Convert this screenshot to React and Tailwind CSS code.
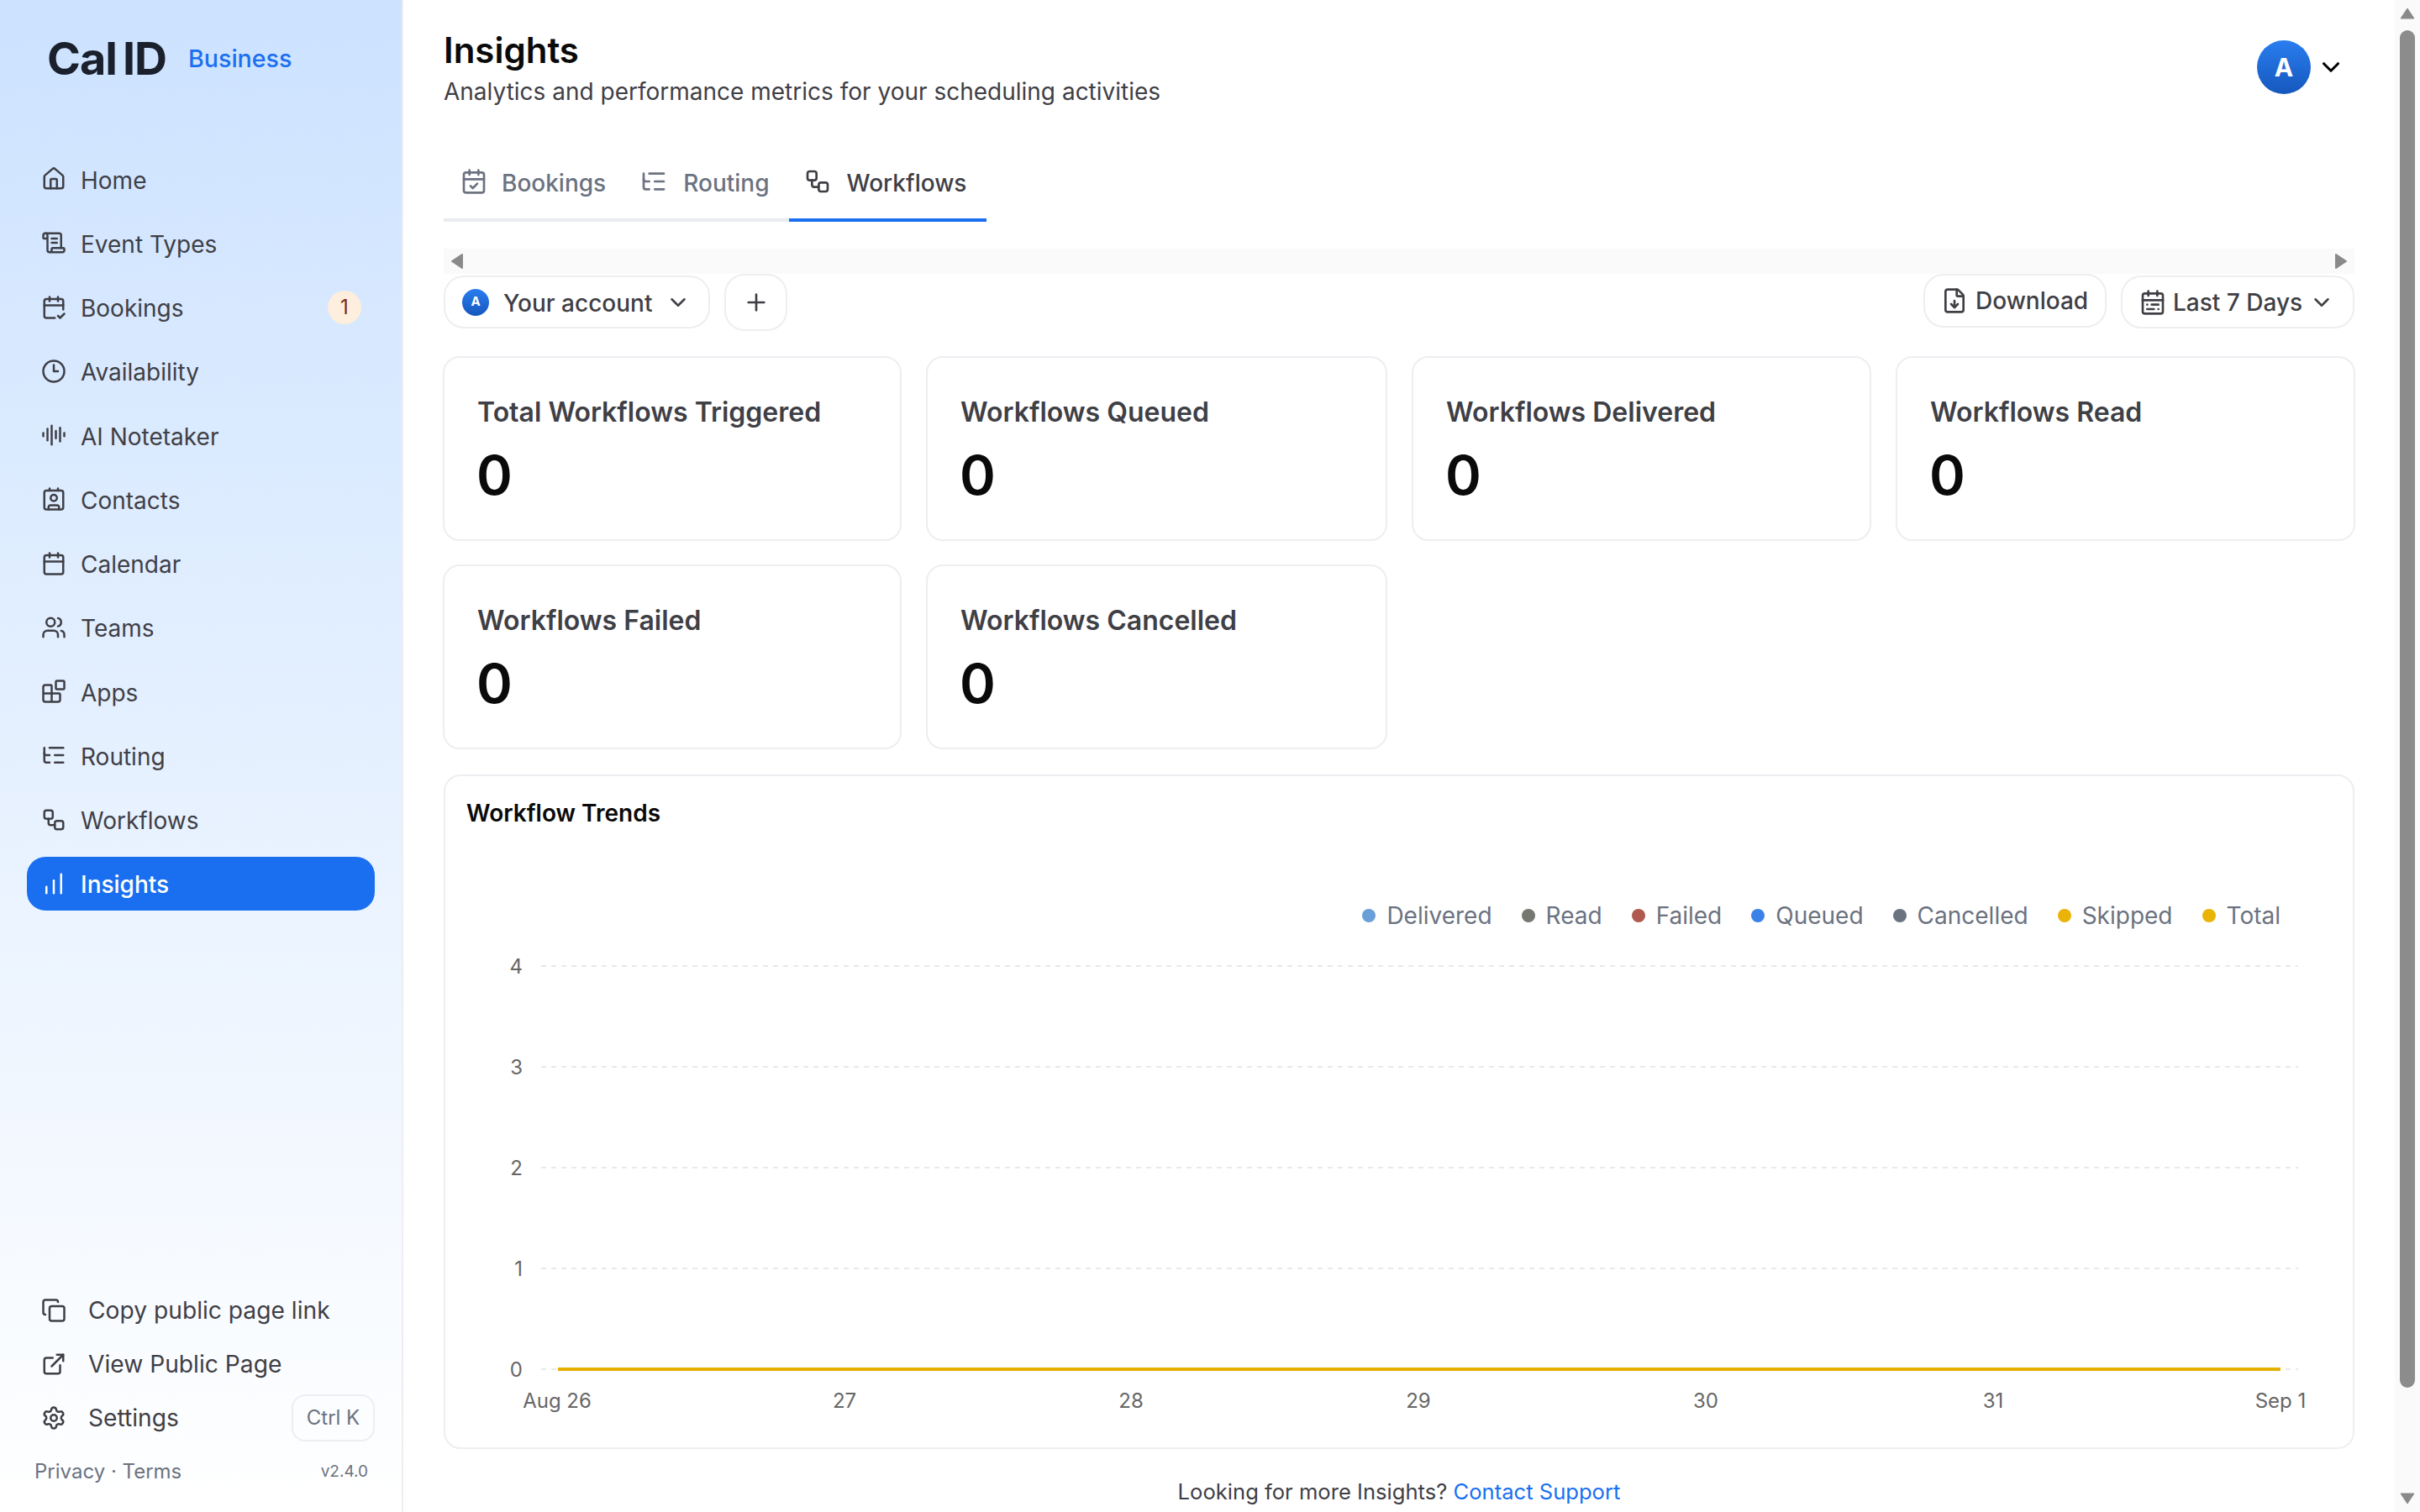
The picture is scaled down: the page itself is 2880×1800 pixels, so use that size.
import React from "react";
import {
  House, ScrollText, CalendarCheck2, CalendarCheck, Clock3, AudioLines, Contact, Calendar, Users, Blocks, ListTree, Workflow,
  ChartNoAxesColumnIncreasing, Copy, ExternalLink, Settings, FileDown, CalendarRange, ChevronDown, Plus,
} from "lucide-react";

const nav = [
  ["Home", House],
  ["Event Types", ScrollText],
  ["Bookings", CalendarCheck2, "1"],
  ["Availability", Clock3],
  ["AI Notetaker", AudioLines],
  ["Contacts", Contact],
  ["Calendar", Calendar],
  ["Teams", Users],
  ["Apps", Blocks],
  ["Routing", ListTree],
  ["Workflows", Workflow],
  ["Insights", ChartNoAxesColumnIncreasing, null, true],
];

const bottom = [
  ["Copy public page link", Copy],
  ["View Public Page", ExternalLink],
  ["Settings", Settings, "Ctrl K"],
];

const cards = ["Total Workflows Triggered", "Workflows Queued", "Workflows Delivered", "Workflows Read", "Workflows Failed", "Workflows Cancelled"];

const legend = [
  ["Delivered", "#6a9fd8"],
  ["Read", "#747870"],
  ["Failed", "#b05a4f"],
  ["Queued", "#3b82e8"],
  ["Cancelled", "#6b7280"],
  ["Skipped", "#eab308"],
  ["Total", "#eab308"],
];

function Sidebar() {
  return (
    <aside className="flex h-[1800px] w-[480px] shrink-0 flex-col border-r-2 border-[#eeeef2] bg-gradient-to-b from-[#cce2ff] to-white px-[32px]">
      <div className="flex h-[140px] items-center pl-[24px]">
        <span className="flex w-[168px] items-baseline text-[54px] leading-none font-bold tracking-[-1px] text-[#1a202c]">
          <span>Cal</span>
          <span className="ml-[7px]">ID</span>
        </span>
        <span className="text-[28.6px] font-medium text-[#1a6ff0]">Business</span>
      </div>
      <nav className="mt-[41px] flex flex-col gap-[12.27px]">
        {nav.map(([label, Icon, badge, active]) => (
          <div key={label} className={`flex h-[64px] items-center gap-[17px] rounded-[22px] pl-[17px] pr-[16px] text-[28px] ${active ? "bg-[#1a6ff0] font-medium text-white" : "text-[#3f3f46]"}`}>
            <Icon size={30} strokeWidth={2} className={active ? "text-white" : "text-[#3f3f46]"} />
            <span className="flex-1 pt-[3px]">{label}</span>
            {badge && <span className="flex h-[40px] w-[40px] items-center justify-center rounded-full bg-[#fdeedd] text-[24px] text-[#7c2d12]">{badge}</span>}
          </div>
        ))}
      </nav>
      <div className="mt-auto flex flex-col">
        {bottom.map(([label, Icon, kbd]) => (
          <div key={label} className="flex h-[64px] items-center gap-[26px] pl-[17px] text-[28.2px] text-[#3f3f46]">
            <Icon size={30} strokeWidth={2} className="text-[#3f3f46]" />
            <span className="flex-1">{label}</span>
            {kbd && <span className="flex h-[56px] w-[99px] items-center justify-center rounded-[16px] border-2 border-[#eeeef2] text-[24px] text-[#6b7280]">{kbd}</span>}
          </div>
        ))}
        <div className="mb-[28px] mt-[12px] flex h-[40px] items-center justify-between pl-[9px] pr-[8px] text-[#6b7280]">
          <span className="text-[24px]">Privacy · Terms</span>
          <span className="text-[19px]">v2.4.0</span>
        </div>
      </div>
    </aside>
  );
}

function Tab({ icon: Icon, label, active, cls }) {
  return (
    <div className={`flex h-[92px] items-center border-b-4 text-[28px] font-medium ${cls} ${active ? "border-[#1a6ff0] text-[#3f3f46]" : "border-[#e9ebef] text-[#6b7280]"}`}>
      <Icon size={32} strokeWidth={2} className={active ? "text-[#3f3f46]" : "text-[#6b7280]"} />
      <span className="pt-[3px]">{label}</span>
    </div>
  );
}

function Arrow({ d }) {
  return (
    <svg viewBox="0 0 14 18" className="h-[18px] w-[14px]">
      <path d={d} fill="#8a8a8a" stroke="#8a8a8a" strokeWidth="2" strokeLinejoin="round" />
    </svg>
  );
}

function Chart() {
  const ys = [[4, 1150], [3, 1270], [2, 1390], [1, 1510], [0, 1630]];
  const xs = [["Aug 26", 663], ["27", 1005], ["28", 1346], ["29", 1688], ["30", 2030], ["31", 2372], ["Sep 1", 2714]];
  return (
    <svg viewBox="530 1125 2270 598" className="mt-[15px] block h-[598px] w-[2270px] shrink-0">
      {ys.map(([v, y]) => (
        <g key={v}>
          <line x1="644" x2="2735" y1={y} y2={y} stroke="#e8e9ec" strokeWidth="2" strokeDasharray="6 6" />
          <text x="622" y={y + 9} textAnchor="end" fontSize="24" fill="#666666">{v}</text>
        </g>
      ))}
      {xs.map(([t, x]) => (
        <text key={t} x={x} y="1676" textAnchor="middle" fontSize="24" fill="#666666">{t}</text>
      ))}
      <line x1="664" x2="2714" y1="1630" y2="1630" stroke="#e6b000" strokeWidth="4" />
    </svg>
  );
}

function Main() {
  return (
    <main className="flex h-[1800px] min-w-0 flex-1 flex-col overflow-hidden px-[48px]">
      <header className="flex h-[172px] shrink-0 items-start justify-between">
        <div className="pt-[33px]">
          <h1 className="text-[42px] leading-[54px] font-semibold text-[#0a0a0a]">Insights</h1>
          <p className="mt-[4px] text-[28px] leading-[36px] text-[#3f3f46]">Analytics and performance metrics for your scheduling activities</p>
        </div>
        <div className="mr-[11px] mt-[48px] flex items-center gap-[7px]">
          <span className="flex h-[64px] w-[64px] items-center justify-center rounded-full bg-gradient-to-b from-[#2a7df0] to-[#1558bd] text-[30px] font-bold text-white">A</span>
          <ChevronDown size={34} strokeWidth={2.2} className="text-black" />
        </div>
      </header>
      <div className="flex shrink-0">
        <Tab icon={CalendarCheck} label="Bookings" cls="gap-[17px] pl-[20px] pr-[21px]" />
        <Tab icon={ListTree} label="Routing" cls="gap-[19px] pl-[20px] pr-[23px]" />
        <Tab icon={Workflow} label="Workflows" active cls="gap-[19px] pl-[18px] pr-[24px]" />
      </div>
      <div className="mt-[32px] flex h-[30px] shrink-0 items-center justify-between bg-[#fafafa] px-[9px]">
        <Arrow d="M13 1v16L1 9z" />
        <Arrow d="M1 1v16L13 9z" />
      </div>
      <div className="flex h-[68px] shrink-0 items-start justify-between">
        <div className="flex items-start gap-[17px]">
          <div className="mt-[2px] flex h-[63px] w-[317px] items-center rounded-[24px] border-2 border-[#eeeef2] pl-[20px] text-[28px] font-medium text-[#3f3f46]">
            <span className="flex h-[32px] w-[32px] items-center justify-center rounded-full bg-gradient-to-b from-[#2a7df0] to-[#1558bd] text-[15px] font-bold text-white">A</span>
            <span className="ml-[17px] pt-[2px]">Your account</span>
            <ChevronDown size={30} strokeWidth={2} className="ml-[16px] text-[#3f3f46]" />
          </div>
          <div className="flex h-[68px] w-[75px] items-center justify-center rounded-[24px] border-2 border-[#eeeef2]">
            <Plus size={32} strokeWidth={2} className="text-[#3f3f46]" />
          </div>
        </div>
        <div className="flex items-start gap-[17px]">
          <div className="flex h-[64px] w-[218px] items-center rounded-[24px] border-2 border-[#eeeef2] pl-[19px] text-[28px] font-medium text-[#3f3f46]">
            <FileDown size={32} strokeWidth={2} className="text-[#3f3f46]" />
            <span className="ml-[9px]">Download</span>
          </div>
          <div className="mt-[2px] flex h-[63px] w-[278px] items-center rounded-[24px] border-2 border-[#eeeef2] pl-[20px] text-[28px] font-medium text-[#3f3f46]">
            <CalendarRange size={32} strokeWidth={2} className="text-[#3f3f46]" />
            <span className="ml-[8px]">Last 7 Days</span>
            <ChevronDown size={30} strokeWidth={2} className="ml-[8px] text-[#3f3f46]" />
          </div>
        </div>
      </div>
      <div className="ml-[-1px] mt-[30px] grid shrink-0 grid-cols-[546px_549px_547px_547px] gap-x-[29px] gap-y-[28px]">
        {cards.map((c) => (
          <div key={c} className="h-[220px] rounded-[20px] border-2 border-[#eeeef2] px-[39px] pt-[44px]">
            <div className="text-[32px] leading-[42px] font-semibold text-[#3f3f46]">{c}</div>
            <div className="ml-[-1px] mt-[14px] text-[65px] leading-[80px] font-semibold text-[#0a0a0a]">0</div>
          </div>
        ))}
      </div>
      <section className="mt-[30px] flex h-[803px] shrink-0 flex-col rounded-[20px] border-2 border-[#eeeef2]">
        <h2 className="ml-[25px] mt-[24px] text-[28px] leading-[40px] font-semibold text-[#0a0a0a]">Workflow Trends</h2>
        <div className="mt-[82px] flex h-[40px] items-center justify-end gap-[35px] pr-[86px]">
          {legend.map(([t, c]) => (
            <div key={t} className="flex items-center gap-[13px] text-[28px] text-[#6b7280]">
              <span className="h-[16px] w-[16px] rounded-full" style={{ background: c }} />
              <span>{t}</span>
            </div>
          ))}
        </div>
        <Chart />
      </section>
      <p className="mt-[33px] text-center text-[25.6px] leading-[36px] text-[#3f3f46]">
        Looking for more Insights? <span className="text-[#1a6ff0]">Contact Support</span>
      </p>
    </main>
  );
}

function Scrollbar() {
  return (
    <div className="flex h-[1800px] w-[30px] shrink-0 flex-col items-center bg-[#fafafa] pt-[9px]">
      <svg viewBox="0 0 18 14" className="h-[14px] w-[18px] shrink-0"><path d="M9 1l8 12H1z" fill="#8a8a8a" stroke="#8a8a8a" strokeLinejoin="round" /></svg>
      <div className="mt-[13px] h-[1616px] w-[18px] shrink-0 rounded-full bg-[#8c8c8c]" />
      <svg viewBox="0 0 18 14" className="mt-[125px] h-[14px] w-[18px] shrink-0"><path d="M1 1h16L9 13z" fill="#8a8a8a" stroke="#8a8a8a" strokeLinejoin="round" /></svg>
    </div>
  );
}

export default function App() {
  return (
    <div className="flex h-[1800px] w-[2880px] overflow-hidden bg-white font-['Inter',sans-serif]">
      <Sidebar />
      <Main />
      <Scrollbar />
    </div>
  );
}
